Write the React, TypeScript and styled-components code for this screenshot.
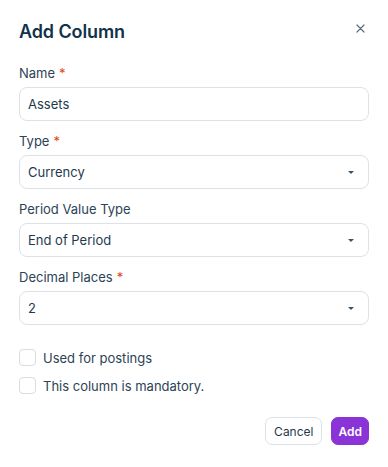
import styled, { createGlobalStyle } from "styled-components";

const GlobalStyle = createGlobalStyle`
    * {
        box-sizing: border-box;
    }
    body {
        margin: 0;
        background: #ffffff;
        font-family: Inter, "Noto Sans", sans-serif;
        color: #1f3a4d;
    }
`;

const Dialog = styled.div`
    width: 388px;
    height: 467px;
    padding: 18px 19px 0 19px;
    display: flex;
    flex-direction: column;
`;

const Header = styled.div`
    display: flex;
    align-items: center;
    justify-content: space-between;
    height: 26px;
    margin-bottom: 20px;
`;

const Title = styled.h2`
    margin: 0;
    font-size: 18px;
    font-weight: 600;
    color: #11324a;
    letter-spacing: -0.1px;
`;

const CloseButton = styled.button`
    border: none;
    background: none;
    padding: 0;
    width: 12px;
    height: 12px;
    margin-right: 3px;
    margin-top: -6px;
    display: flex;
    align-items: center;
    justify-content: center;
    cursor: pointer;
`;

const Form = styled.div`
    display: flex;
    flex-direction: column;
    gap: 11px;
`;

const Field = styled.div`
    display: flex;
    flex-direction: column;
`;

const Label = styled.label`
    font-size: 13px;
    line-height: 18px;
    margin-bottom: 5px;
    color: #2b4356;
`;

const Required = styled.span`
    color: #e5441d;
    margin-left: 4px;
`;

const Box = styled.div`
    height: 34px;
    border: 1px solid #dde2e8;
    border-radius: 8px;
    padding: 0 14px 0 8px;
    display: flex;
    align-items: center;
    justify-content: space-between;
    font-size: 13px;
    color: #1f3a4d;
`;

const Caret = styled.span`
    width: 0;
    height: 0;
    border-left: 3px solid transparent;
    border-right: 3px solid transparent;
    border-top: 3px solid #3a5568;
`;

const Checks = styled.div`
    display: flex;
    flex-direction: column;
    gap: 11px;
    margin-top: 24px;
`;

const CheckRow = styled.label`
    display: flex;
    align-items: center;
    gap: 7px;
    font-size: 13px;
    color: #2b4356;
`;

const CheckBox = styled.span`
    width: 17px;
    height: 17px;
    border: 1px solid #d8dde3;
    border-radius: 4px;
    background: #fff;
`;

const Footer = styled.div`
    display: flex;
    justify-content: flex-end;
    gap: 9px;
    margin-top: 23px;
`;

const Button = styled.button<{ $primary?: boolean }>`
    height: 28px;
    padding: 0 ${(p) => (p.$primary ? 6 : 8)}px;
    border-radius: 7px;
    font-family: Inter, "Noto Sans", sans-serif;
    font-size: 12px;
    font-weight: ${(p) => (p.$primary ? 600 : 400)};
    border: 1px solid ${(p) => (p.$primary ? "#8a33d6" : "#dde2e8")};
    background: ${(p) => (p.$primary ? "#8a33d6" : "#ffffff")};
    color: ${(p) => (p.$primary ? "#ffffff" : "#1f3a4d")};
    cursor: pointer;
`;

const fields = [
    { label: "Name", required: true, value: "Assets", select: false },
    { label: "Type", required: true, value: "Currency", select: true },
    { label: "Period Value Type", required: false, value: "End of Period", select: true },
    { label: "Decimal Places", required: true, value: "2", select: true },
];

const App = () => {
    return (
        <>
            <GlobalStyle />
            <Dialog>
                <Header>
                    <Title>Add Column</Title>
                    <CloseButton aria-label="Close">
                        <svg width="9" height="9" viewBox="0 0 9 9">
                            <path
                                d="M1 1L8 8M8 1L1 8"
                                stroke="#5a6f7e"
                                strokeWidth="1.2"
                                strokeLinecap="round"
                            />
                        </svg>
                    </CloseButton>
                </Header>
                <Form>
                    {fields.map((f) => (
                        <Field key={f.label}>
                            <Label>
                                {f.label}
                                {f.required && <Required>*</Required>}
                            </Label>
                            <Box>
                                <span>{f.value}</span>
                                {f.select && <Caret />}
                            </Box>
                        </Field>
                    ))}
                </Form>
                <Checks>
                    <CheckRow>
                        <CheckBox />
                        Used for postings
                    </CheckRow>
                    <CheckRow>
                        <CheckBox />
                        This column is mandatory.
                    </CheckRow>
                </Checks>
                <Footer>
                    <Button>Cancel</Button>
                    <Button $primary>Add</Button>
                </Footer>
            </Dialog>
        </>
    );
};

export default App;
